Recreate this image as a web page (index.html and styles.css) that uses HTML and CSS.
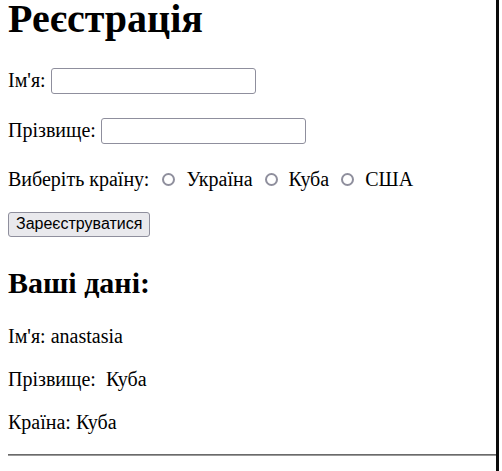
FILE: index.html
```html
<!DOCTYPE html>
<html lang="uk">
<head>
<meta charset="utf-8">
<title>Реєстрація</title>
<link rel="stylesheet" href="styles.css">
</head>
<body>
<div class="page">
  <h1 class="title">Реєстрація</h1>
  <form class="form">
    <p class="row"><label>Ім'я: <input class="field" type="text"></label></p>
    <p class="row"><label>Прізвище: <input class="field" type="text"></label></p>
    <p class="row">Виберіть країну:
      <label class="opt"><span class="radio radio-first"></span> Україна</label>
      <label class="opt"><span class="radio"></span> Куба</label>
      <label class="opt"><span class="radio"></span> США</label>
    </p>
    <p class="row"><button class="btn" type="button">Зареєструватися</button></p>
  </form>
  <h2 class="subtitle">Ваші дані:</h2>
  <p class="info">Ім'я: anastasia</p>
  <p class="info">Прізвище:&nbsp; Куба</p>
  <p class="info">Країна: Куба</p>
  <hr class="rule">
</div>
</body>
</html>
```
FILE: styles.css
```css
html, body {
  margin: 0;
  padding: 0;
  background: #fff;
}
body {
  font-family: "Liberation Serif", "Times New Roman", serif;
  font-size: 20px;
  color: #000;
}
.page {
  box-sizing: border-box;
  width: 499px;
  min-height: 471px;
  padding: 0 0 0 8px;
  border-right: 3px solid #0b0b0b;
}
.title {
  font-size: 40px;
  line-height: 38px;
  font-weight: bold;
  margin: 0 0 30px;
  padding-top: 0.1px;
}
.form { margin: 0; }
.row { margin: 20px 0; }
.field {
  box-sizing: border-box;
  width: 205px;
  height: 26px;
  border: 1px solid #8f8f9d;
  border-radius: 3px;
  padding: 1px 3px;
  font: 16px "Liberation Sans", Arial, sans-serif;
  vertical-align: 1px;
  margin-bottom: 4px;
  background: #fff;
}
.radio {
  display: inline-block;
  box-sizing: border-box;
  width: 13px;
  height: 13px;
  border: 2px solid #8f8f9d;
  border-radius: 50%;
  margin: 0 6px 0 7px;
  vertical-align: 0;
}
.radio-first { margin-left: 8px; }
.btn {
  box-sizing: border-box;
  height: 25px;
  padding: 0 7px;
  border: 1px solid #8f8f9d;
  border-radius: 3px;
  background: #e9e9ed;
  color: #000;
  font: 16px "Liberation Sans", Arial, sans-serif;
}
.subtitle {
  font-size: 30px;
  font-weight: bold;
  margin: 29px 0 25px;
}
.info { margin: 20px 0; }
.rule {
  margin: 0;
  border: 0;
  border-top: 1px solid #6a6a6a;
  border-bottom: 1px solid #9a9a9a;
}
```
